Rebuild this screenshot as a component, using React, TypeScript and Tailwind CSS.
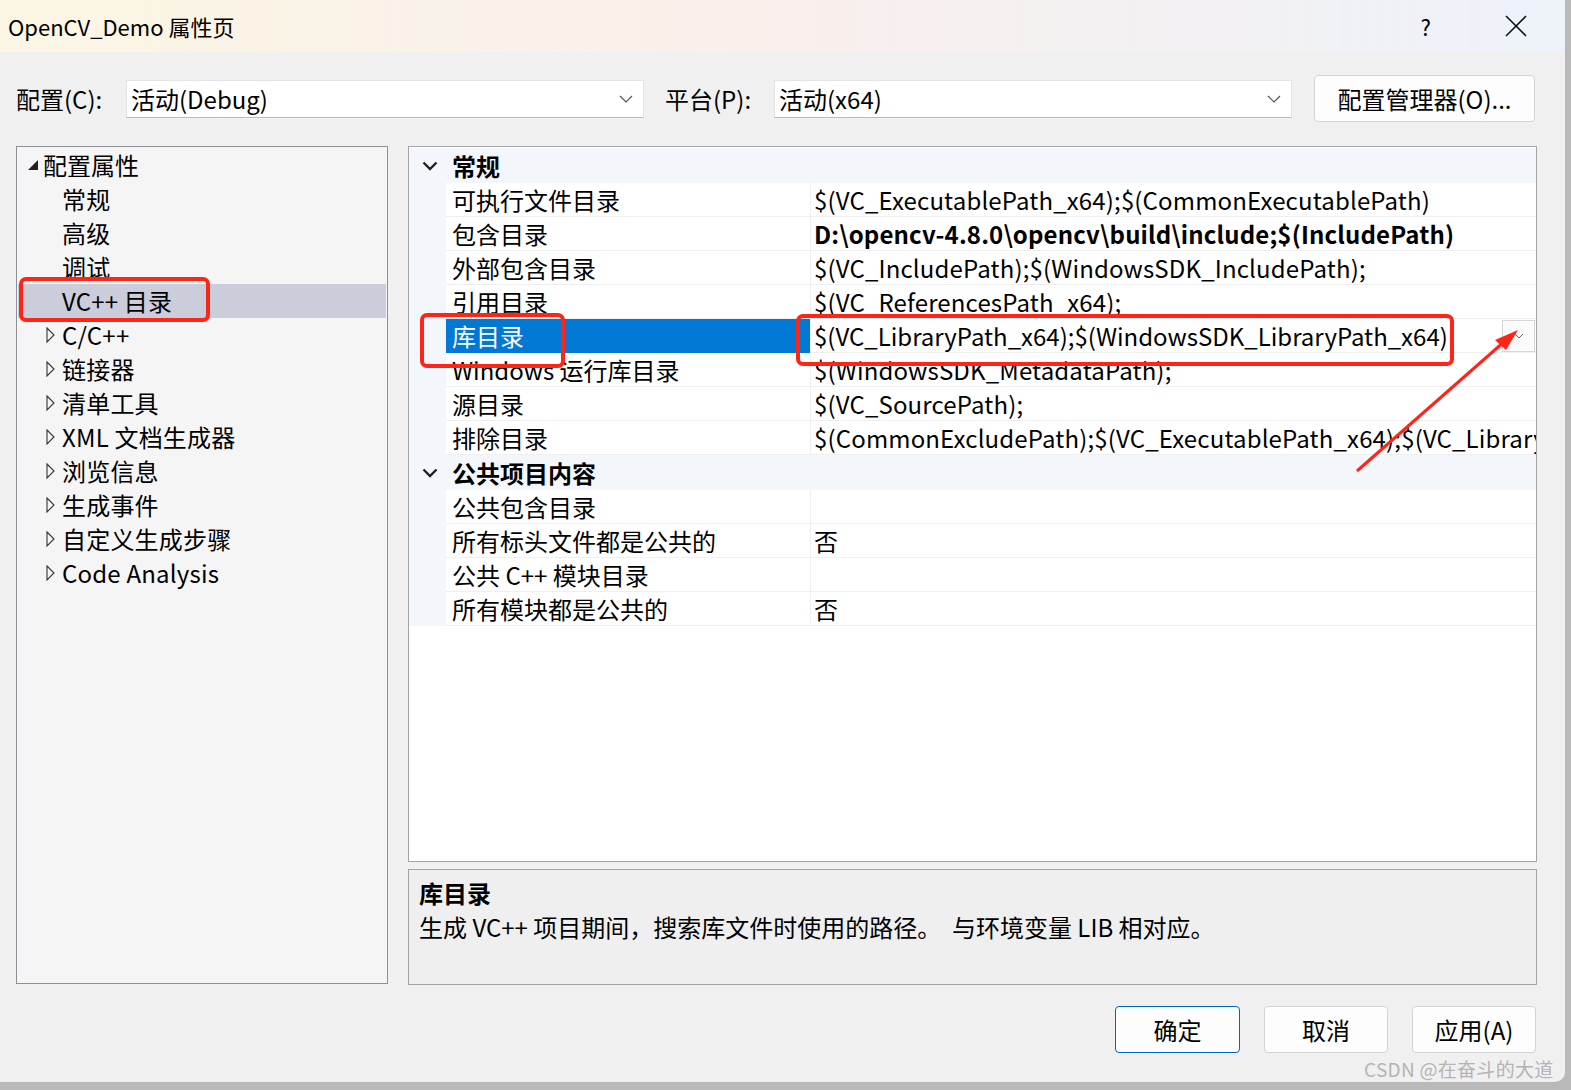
import React from 'react';

const treeItems = [
  { label: '常规', kind: 'leaf' },
  { label: '高级', kind: 'leaf' },
  { label: '调试', kind: 'leaf' },
  { label: 'VC++ 目录', kind: 'leaf', selected: true },
  { label: 'C/C++', kind: 'group' },
  { label: '链接器', kind: 'group' },
  { label: '清单工具', kind: 'group' },
  { label: 'XML 文档生成器', kind: 'group' },
  { label: '浏览信息', kind: 'group' },
  { label: '生成事件', kind: 'group' },
  { label: '自定义生成步骤', kind: 'group' },
  { label: 'Code Analysis', kind: 'group' },
];

const general = [
  { name: '可执行文件目录', value: '$(VC_ExecutablePath_x64);$(CommonExecutablePath)' },
  { name: '包含目录', value: 'D:\\opencv-4.8.0\\opencv\\build\\include;$(IncludePath)', bold: true },
  { name: '外部包含目录', value: '$(VC_IncludePath);$(WindowsSDK_IncludePath);' },
  { name: '引用目录', value: '$(VC_ReferencesPath_x64);' },
  { name: '库目录', value: '$(VC_LibraryPath_x64);$(WindowsSDK_LibraryPath_x64)', selected: true },
  { name: 'Windows 运行库目录', value: '$(WindowsSDK_MetadataPath);' },
  { name: '源目录', value: '$(VC_SourcePath);' },
  { name: '排除目录', value: '$(CommonExcludePath);$(VC_ExecutablePath_x64);$(VC_LibraryPath_x64)' },
];

const publicItems = [
  { name: '公共包含目录', value: '' },
  { name: '所有标头文件都是公共的', value: '否' },
  { name: '公共 C++ 模块目录', value: '' },
  { name: '所有模块都是公共的', value: '否' },
];

function Chevron() {
  return (
    <svg width="14" height="8" viewBox="0 0 14 8" className="shrink-0">
      <polyline points="1,1 7,7 13,1" fill="none" stroke="#555" strokeWidth="1.2" />
    </svg>
  );
}

function CategoryRow({ title }: { title: string }) {
  return (
    <div className="flex h-[35px] items-center bg-[#f3f6fb]">
      <div className="flex w-[37px] justify-center pl-[5px]">
        <svg width="16" height="10" viewBox="0 0 16 10">
          <polyline points="1.5,1.5 8,8 14.5,1.5" fill="none" stroke="#222" strokeWidth="2.4" />
        </svg>
      </div>
      <span className="pl-[6px] font-bold text-black">{title}</span>
    </div>
  );
}

function PropRow({ name, value, bold, selected }: { name: string; value: string; bold?: boolean; selected?: boolean }) {
  return (
    <div className="flex h-[34px] bg-[#f3f6fb]">
      <div className="w-[37px] shrink-0" />
      <div
        className={`w-[364px] shrink-0 overflow-hidden whitespace-nowrap border-b pl-[6px] leading-[33px] ${
          selected ? 'border-[#0078d4] bg-[#0078d4] text-white' : 'border-[#efefef] bg-white text-black'
        }`}
      >
        {name}
      </div>
      <div className="flex min-w-0 flex-1 items-center border-b border-l border-[#efefef] bg-white">
        <span
          className={`min-w-0 flex-1 overflow-hidden whitespace-nowrap pl-[3px] leading-[33px] ${
            selected ? '' : 'tracking-[0.15px]'
          } ${bold ? 'font-bold' : ''}`}
        >
          {value}
        </span>
        {selected && (
          <div className="mr-[1px] flex h-[32px] w-[33px] items-center justify-center border border-[#d6d6d6] bg-[#fbfbfb]">
            <svg width="10" height="6" viewBox="0 0 10 6">
              <polyline points="1,1 5,5 9,1" fill="none" stroke="#666" strokeWidth="1" />
            </svg>
          </div>
        )}
      </div>
    </div>
  );
}

export default function App() {
  return (
    <div className="relative h-[1090px] w-[1571px] overflow-hidden bg-[#b9b9b9] font-['Noto_Sans_CJK_SC',sans-serif] text-[24px] text-black">
      <div className="flex h-[1082px] w-[1565px] flex-col rounded-br-[10px] bg-[#f0f0f0]">
        {/* title bar */}
        <div className="flex h-[52px] items-center bg-gradient-to-r from-[#fbf6e4] via-[#f9efec] to-[#edf2fa] pl-[8px]">
          <span className="flex-1 text-[22px]">OpenCV_Demo 属性页</span>
          <span className="mr-[74px] text-[22px]">?</span>
          <svg width="22" height="22" viewBox="0 0 22 22" className="mr-[38px]">
            <line x1="1" y1="1" x2="21" y2="21" stroke="#111" strokeWidth="1.6" />
            <line x1="21" y1="1" x2="1" y2="21" stroke="#111" strokeWidth="1.6" />
          </svg>
        </div>

        {/* config row */}
        <div className="mt-[23px] flex h-[47px] items-center pl-[16px] pr-[30px]">
          <span className="w-[110px]">配置(C):</span>
          <div className="flex h-[38px] w-[518px] items-center border border-[#e3e3e3] border-b-[#bdbdbd] bg-white pl-[4px] pr-[10px]">
            <span className="flex-1">活动(Debug)</span>
            <Chevron />
          </div>
          <span className="ml-[21px] w-[109px]">平台(P):</span>
          <div className="flex h-[38px] w-[518px] items-center border border-[#e3e3e3] border-b-[#bdbdbd] bg-white pl-[4px] pr-[10px]">
            <span className="flex-1">活动(x64)</span>
            <Chevron />
          </div>
          <button className="ml-[22px] h-[47px] w-[221px] rounded-[4px] border border-[#d3d3d3] bg-[#fdfdfd]">
            配置管理器(O)...
          </button>
        </div>

        {/* main */}
        <div className="mt-[24px] flex pl-[16px]">
          <div className="h-[838px] w-[372px] border border-[#8b8f97] bg-[#f5f5f5] pt-[1px]">
            <div className="flex h-[34px] items-center">
              <svg width="12" height="12" viewBox="0 0 12 12" className="ml-[10px] mr-[4px]">
                <polygon points="11,1 11,11 1,11" fill="#222" />
              </svg>
              <span>配置属性</span>
            </div>
            {treeItems.map((it) => (
              <div
                key={it.label}
                className={`mx-[1px] flex h-[34px] items-center ${it.selected ? 'bg-[#cbcdda]' : ''}`}
              >
                <div className="flex w-[44px] justify-end pr-[7px]">
                  {it.kind === 'group' && (
                    <svg width="9" height="16" viewBox="0 0 9 16">
                      <polygon points="1,1 8,8 1,15" fill="none" stroke="#333" strokeWidth="1.1" />
                    </svg>
                  )}
                </div>
                <span className="tracking-[0.2px]">{it.label}</span>
              </div>
            ))}
          </div>

          <div className="ml-[20px] flex w-[1129px] flex-col">
            <div className="h-[716px] overflow-hidden border border-[#a3a3a3] bg-white pt-[1px]">
              <CategoryRow title="常规" />
              {general.map((r) => (
                <PropRow key={r.name} {...r} />
              ))}
              <CategoryRow title="公共项目内容" />
              {publicItems.map((r) => (
                <PropRow key={r.name} {...r} />
              ))}
            </div>
            <div className="mt-[7px] h-[116px] border border-[#a3a3a3] bg-[#efefef] px-[10px] pt-[6px]">
              <div className="font-bold leading-[34px]">库目录</div>
              <div className="whitespace-pre leading-[34px]">生成 VC++ 项目期间，搜索库文件时使用的路径。  与环境变量 LIB 相对应。</div>
            </div>
          </div>
        </div>

        {/* buttons */}
        <div className="mt-[21px] flex justify-end gap-[24px] pr-[29px]">
          <button className="h-[47px] w-[125px] rounded-[4px] border border-[#0067c0] bg-[#fdfdfd]">确定</button>
          <button className="h-[47px] w-[124px] rounded-[4px] border border-[#d3d3d3] bg-[#fdfdfd]">取消</button>
          <button className="h-[47px] w-[124px] rounded-[4px] border border-[#d3d3d3] bg-[#fdfdfd]">应用(A)</button>
        </div>
      </div>

      {/* annotations */}
      <div className="pointer-events-none absolute left-[19px] top-[277px] h-[45px] w-[191px] rounded-[7px] border-[4px] border-[#ff2418]" />
      <div className="pointer-events-none absolute left-[420px] top-[313px] h-[55px] w-[145px] rounded-[7px] border-[4px] border-[#ff2418]" />
      <div className="pointer-events-none absolute left-[796px] top-[314px] h-[52px] w-[658px] rounded-[7px] border-[4px] border-[#ff2418]" />
      <svg className="pointer-events-none absolute left-0 top-0" width="1571" height="1090">
        <line x1="1357" y1="471" x2="1505" y2="341" stroke="#ff2418" strokeWidth="3" />
        <polygon points="1518,330 1495,340 1506,350" fill="#ff2418" />
      </svg>
      <span className="pointer-events-none absolute left-[1364px] top-[1055px] text-[19px] tracking-[0.3px] text-[#b4b4b4]">CSDN @在奋斗的大道</span>
    </div>
  );
}
